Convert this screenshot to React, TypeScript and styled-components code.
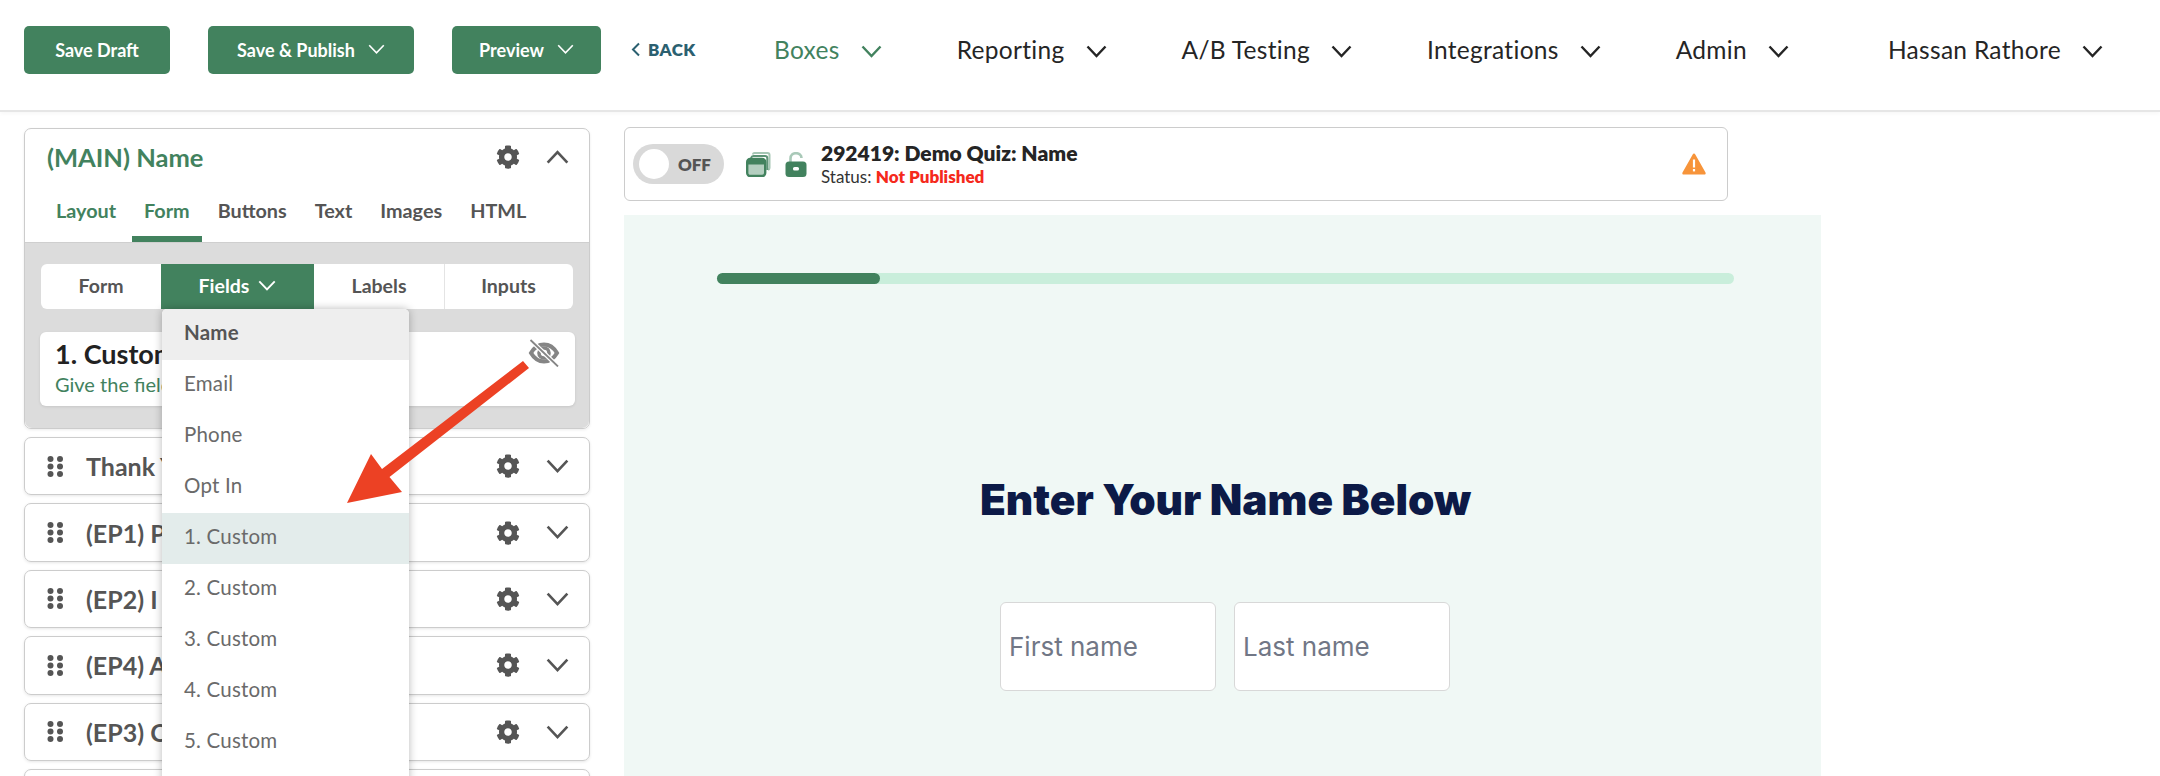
import styled, { createGlobalStyle } from "styled-components"
import { FaCog } from "react-icons/fa"

const green = "#42825e"
const grey = "#555555"

const GlobalStyle = createGlobalStyle`
  html, body {
    margin: 0;
    height: 776px;
    overflow: hidden;
    background: #fff;
    font-family: "Lato", "Open Sans", sans-serif;
  }
  * {
    box-sizing: border-box;
  }
`

const Page = styled.div`
  position: relative;
  width: 2160px;
  height: 776px;
  overflow: hidden;
`

const Header = styled.header`
  display: flex;
  align-items: center;
  height: 112px;
  padding: 0 0 11px 24px;
  border-bottom: 2px solid #e6e6e6;
  box-shadow: 0 2px 4px rgba(0, 0, 0, 0.03);
`

const ActionButton = styled.div<{ $width: number }>`
  display: flex;
  align-items: center;
  justify-content: center;
  gap: 13px;
  width: ${(p) => p.$width}px;
  height: 48px;
  margin-right: 38px;
  border-radius: 5px;
  background: ${green};
  color: #fff;
  font-size: 18px;
  font-weight: 700;
`

const BackLink = styled.div`
  display: flex;
  align-items: center;
  gap: 7px;
  margin-left: -8px;
  width: 143px;
  color: #2b6070;
  font-size: 17px;
  font-weight: 800;
  letter-spacing: 0.4px;
`

const NavList = styled.nav`
  display: flex;
  align-items: center;
  gap: 75px;
`

const NavItem = styled.div<{ $active?: boolean; $push?: number }>`
  display: flex;
  align-items: center;
  gap: 21px;
  margin-left: ${(p) => p.$push ?? 0}px;
  color: ${(p) => (p.$active ? green : "#252525")};
  font-size: 24.5px;
  letter-spacing: 0.3px;

  svg {
    margin-top: 5px;
  }
`

const Main = styled.main`
  display: flex;
  align-items: flex-start;
  gap: 34px;
  padding: 16px 0 0 24px;
`

const LeftColumn = styled.aside`
  display: flex;
  flex-direction: column;
  gap: 8px;
  flex: 0 0 566px;
`

const Panel = styled.section`
  border: 1px solid #cccccc;
  border-radius: 7px;
  box-shadow: 0 1px 3px rgba(0, 0, 0, 0.08);
`

const PanelTop = styled.div`
  display: flex;
  flex-direction: column;
  height: 114px;
  border-bottom: 1px solid #cfcfcf;
`

const PanelTitleRow = styled.div`
  display: flex;
  align-items: center;
  height: 58px;
  padding: 0 20px 2px 22px;
`

const PanelTitle = styled.h2`
  flex: 1;
  margin: 0;
  color: ${green};
  font-size: 25.5px;
  font-weight: 700;
`

const IconGroup = styled.div`
  display: flex;
  align-items: center;
  gap: 26px;
  color: ${grey};
`

const TabRow = styled.div`
  display: flex;
  gap: 4px;
  padding-left: 19px;
  flex: 1;
`

const Tab = styled.div<{ $active?: boolean; $green?: boolean }>`
  display: flex;
  align-items: center;
  height: 100%;
  padding: 0 12px 4px;
  border-bottom: ${(p) => (p.$active ? `6px solid ${green}` : "6px solid transparent")};
  color: ${(p) => (p.$green ? green : grey)};
  font-size: 19.8px;
  font-weight: 700;
`

const PanelBody = styled.div`
  height: 185px;
  padding: 21px 16px 0 16px;
  border-radius: 0 0 7px 7px;
  background: #dcdcdc;
`

const SubTabs = styled.div`
  display: grid;
  grid-template-columns: 120px 153px 130px 128px;
  height: 45px;
  border-radius: 6px;
  background: #fff;
`

const SubTab = styled.div<{ $active?: boolean; $divider?: boolean }>`
  position: relative;
  display: flex;
  align-items: center;
  justify-content: center;
  gap: 9px;
  padding-bottom: 2px;
  border-left: ${(p) => (p.$divider ? "1px solid #e4e4e4" : "none")};
  background: ${(p) => (p.$active ? green : "transparent")};
  color: ${(p) => (p.$active ? "#fff" : grey)};
  font-size: 19.5px;
  font-weight: 700;
`

const Dropdown = styled.div`
  position: absolute;
  top: 45px;
  left: 1px;
  z-index: 5;
  width: 247px;
  background: #fff;
  border-radius: 5px 5px 0 0;
  box-shadow: 0 0 8px rgba(0, 0, 0, 0.28);
  overflow: hidden;
`

const DropdownItem = styled.div<{ $selected?: boolean; $hover?: boolean }>`
  display: flex;
  align-items: center;
  height: 51px;
  padding: 0 0 5px 22px;
  background: ${(p) => (p.$selected ? "#eeeeee" : p.$hover ? "#e3eceb" : "#fff")};
  color: ${(p) => (p.$selected ? grey : "#6a6a6a")};
  font-size: 20.5px;
  font-weight: ${(p) => (p.$selected ? 700 : 400)};
  letter-spacing: 0.2px;
`

const FieldCard = styled.div`
  display: flex;
  justify-content: space-between;
  height: 74px;
  margin: 23px -2px 0 -1px;
  padding: 5px 15px 0 15px;
  border-radius: 6px;
  background: #fff;
  box-shadow: 0 1px 3px rgba(0, 0, 0, 0.1);

  > svg {
    margin-top: 2px;
  }
`

const FieldTitle = styled.div`
  color: #222;
  font-size: 27px;
  font-weight: 700;
  line-height: 34px;
`

const FieldHint = styled.div`
  color: ${green};
  font-size: 20px;
  line-height: 26px;
`

const SectionRow = styled.div`
  display: flex;
  align-items: center;
  height: 58.4px;
  padding: 0 20px 0 22px;
  border: 1px solid #cccccc;
  border-radius: 7px;
  box-shadow: 0 1px 3px rgba(0, 0, 0, 0.1);
`

const SectionName = styled.div`
  flex: 1;
  margin-left: 22px;
  color: ${grey};
  font-size: 25px;
  font-weight: 700;
`

const RightColumn = styled.div`
  display: flex;
  flex-direction: column;
  gap: 14px;
  margin-top: -1px;
  flex: 0 0 1197px;
`

const StatusBar = styled.div`
  display: flex;
  align-items: center;
  width: 1104px;
  height: 74px;
  padding: 0 21px 0 8px;
  border: 1px solid #cccccc;
  border-radius: 6px;
`

const ToggleTrack = styled.div`
  display: flex;
  align-items: center;
  justify-content: space-between;
  width: 91px;
  height: 40px;
  padding: 0 13px 0 6px;
  border-radius: 20px;
  background: #d9d9d9;
  color: ${grey};
  font-size: 17px;
  font-weight: 800;
`

const ToggleKnob = styled.div`
  width: 30px;
  height: 30px;
  border-radius: 50%;
  background: #fff;
`

const StatusIcons = styled.div`
  display: flex;
  align-items: center;
  gap: 14px;
  margin: 0 14px 0 22px;
`

const StatusText = styled.div`
  flex: 1;
`

const StatusTitle = styled.div`
  color: #252525;
  font-size: 21px;
  font-weight: 800;
  line-height: 26px;
`

const StatusLine = styled.div`
  color: #333;
  font-size: 17px;
  line-height: 22px;

  b {
    color: #f5291c;
    font-weight: 800;
  }
`

const Preview = styled.section`
  display: flex;
  flex-direction: column;
  align-items: center;
  height: 700px;
  padding: 58px 87px 0 93px;
  background: #f0f8f5;
`

const Progress = styled.div`
  width: 100%;
  height: 11px;
  border-radius: 6px;
  background: #c9eedb;
`

const ProgressFill = styled.div`
  height: 100%;
  border-radius: 6px;
  background: ${green};
`

const Heading = styled.h1`
  margin: 191px 0 0;
  color: #0c1a47;
  font-family: "Inter", sans-serif;
  font-size: 42.3px;
  font-weight: 900;
  line-height: 50px;
`

const NameRow = styled.div`
  display: flex;
  gap: 18px;
  margin: 77px 0 0 -1px;
`

const NameInput = styled.input`
  width: 216px;
  height: 89px;
  padding: 0 8px;
  border: 1px solid #d8d8d8;
  border-radius: 6px;
  background: #fff;
  outline: none;
  font-family: "Inter", sans-serif;
  font-size: 26px;

  &::placeholder {
    color: #717786;
    opacity: 1;
  }
`

const ArrowOverlay = styled.svg`
  position: absolute;
  top: 0;
  left: 0;
  z-index: 10;
  pointer-events: none;
`

const Chevron = ({ size = 21, up = false, weight = 2.4 }: { size?: number; up?: boolean; weight?: number }) => (
  <svg width={size} height={size * 0.62} viewBox="0 0 21 13" fill="none" stroke="currentColor" strokeWidth={weight}>
    <path d={up ? "M1.5 11.5 10.5 2l9 9.5" : "M1.5 1.5 10.5 11l9-9.5"} />
  </svg>
)

const BackChevron = () => (
  <svg width="10" height="15" viewBox="0 0 10 15" fill="none" stroke="currentColor" strokeWidth="2">
    <path d="M8 1.5 2 7.5l6 6" />
  </svg>
)

const DragDots = () => (
  <svg width="17" height="21" viewBox="0 0 17 21" fill="#555555">
    <circle cx="3.5" cy="3" r="3" />
    <circle cx="13" cy="3" r="3" />
    <circle cx="3.5" cy="10.5" r="3" />
    <circle cx="13" cy="10.5" r="3" />
    <circle cx="3.5" cy="18" r="3" />
    <circle cx="13" cy="18" r="3" />
  </svg>
)

const EyeOff = () => (
  <svg width="32" height="28" viewBox="0 0 32 28" fill="none">
    <path d="M3 14C6.5 8 11 5.5 16 5.5S25.5 8 29 14c-3.5 6-8 8.5-13 8.5S6.5 20 3 14Z" stroke="#858585" strokeWidth="4" />
    <circle cx="16" cy="14" r="5" stroke="#858585" strokeWidth="3.6" />
    <path d="M3 1.5 29.5 27" stroke="#fff" strokeWidth="4.5" />
    <path d="M2.5 1 30 27.5" stroke="#858585" strokeWidth="1.8" />
  </svg>
)

const CopyIcon = () => (
  <svg width="25" height="25" viewBox="0 0 25 25" fill="none">
    <path d="M7 2.5c0-1 .7-1.500 1.500-1.500h13c1.200 0 2 .8 2 2v13c0 1-.6 1.600-1.500 1.700" stroke="#a5c6b4" strokeWidth="2" />
    <path d="M5 6c.4-1.300 1.200-2 2.500-2h11.500c1.500 0 2.300.8 2.300 2.300V18" stroke="#5d9376" strokeWidth="2" />
    <rect x="1.200" y="7" width="18" height="17" rx="3" fill="#b4cfc0" stroke={green} strokeWidth="2.400" />
    <path d="M1.200 10c0-2 1-3 3-3h12c2 0 3 1 3 3v2.500h-18Z" fill={green} />
  </svg>
)

const LockIcon = () => (
  <svg width="22" height="25" viewBox="0 0 22 25" fill="none">
    <path d="M5.500 10V6.500C5.500 3 8 1.200 11 1.200s5.500 1.800 5.500 4.800" stroke="#a9c9b8" strokeWidth="2.600" />
    <rect x="0.500" y="9.500" width="21" height="15.500" rx="3.500" fill={green} />
    <rect x="8" y="15" width="6" height="3.600" rx="1.600" fill="#fff" />
  </svg>
)

const WarningIcon = () => (
  <svg width="24" height="22" viewBox="0 0 24 22">
    <path d="M12 .5c.6 0 1 .3 1.300.9l10.200 18c.5 1 0 2.100-1.200 2.100H1.700C.5 21.500 0 20.400.5 19.400l10.200-18c.3-.6.7-.9 1.300-.9Z" fill="#f7943a" />
    <rect x="10.900" y="6.500" width="2.200" height="8" fill="#fff" />
    <rect x="10.900" y="16" width="2.200" height="2.400" fill="#fff" />
  </svg>
)

const customFields = ["1. Custom", "2. Custom", "3. Custom", "4. Custom", "5. Custom"]
const sections = ["Thank Y", "(EP1) P", "(EP2) I", "(EP4) A", "(EP3) C", ""]
const navItems = ["Reporting", "A/B Testing", "Integrations", "Admin"]

export default function App() {
  return (
    <Page>
      <GlobalStyle />
      <Header>
        <ActionButton $width={146}>Save Draft</ActionButton>
        <ActionButton $width={206}>
          Save &amp; Publish <Chevron size={17} weight={2} />
        </ActionButton>
        <ActionButton $width={149}>
          Preview <Chevron size={17} weight={2} />
        </ActionButton>
        <BackLink>
          <BackChevron />
          BACK
        </BackLink>
        <NavList>
          <NavItem $active>
            Boxes <Chevron />
          </NavItem>
          {navItems.map((item) => (
            <NavItem key={item}>
              {item} <Chevron />
            </NavItem>
          ))}
          <NavItem $push={24}>
            Hassan Rathore <Chevron />
          </NavItem>
        </NavList>
      </Header>
      <Main>
        <LeftColumn>
          <Panel>
            <PanelTop>
              <PanelTitleRow>
                <PanelTitle>(MAIN) Name</PanelTitle>
                <IconGroup>
                  <FaCog size={24} />
                  <Chevron size={23} up />
                </IconGroup>
              </PanelTitleRow>
              <TabRow>
                <Tab $green>Layout</Tab>
                <Tab $green $active>
                  Form
                </Tab>
                <Tab>Buttons</Tab>
                <Tab>Text</Tab>
                <Tab>Images</Tab>
                <Tab>HTML</Tab>
              </TabRow>
            </PanelTop>
            <PanelBody>
              <SubTabs>
                <SubTab>Form</SubTab>
                <SubTab $active>
                  Fields <Chevron size={18} weight={2.2} />
                  <Dropdown>
                    <DropdownItem $selected>Name</DropdownItem>
                    <DropdownItem>Email</DropdownItem>
                    <DropdownItem>Phone</DropdownItem>
                    <DropdownItem>Opt In</DropdownItem>
                    {customFields.map((field, i) => (
                      <DropdownItem key={field} $hover={i === 0}>
                        {field}
                      </DropdownItem>
                    ))}
                    <DropdownItem />
                  </Dropdown>
                </SubTab>
                <SubTab>Labels</SubTab>
                <SubTab $divider>Inputs</SubTab>
              </SubTabs>
              <FieldCard>
                <div>
                  <FieldTitle>1. Custom</FieldTitle>
                  <FieldHint>Give the field</FieldHint>
                </div>
                <EyeOff />
              </FieldCard>
            </PanelBody>
          </Panel>
          {sections.map((name, i) => (
            <SectionRow key={i}>
              <DragDots />
              <SectionName>{name}</SectionName>
              <IconGroup>
                <FaCog size={24} />
                <Chevron size={23} />
              </IconGroup>
            </SectionRow>
          ))}
        </LeftColumn>
        <RightColumn>
          <StatusBar>
            <ToggleTrack>
              <ToggleKnob />
              OFF
            </ToggleTrack>
            <StatusIcons>
              <CopyIcon />
              <LockIcon />
            </StatusIcons>
            <StatusText>
              <StatusTitle>292419: Demo Quiz: Name</StatusTitle>
              <StatusLine>
                Status: <b>Not Published</b>
              </StatusLine>
            </StatusText>
            <WarningIcon />
          </StatusBar>
          <Preview>
            <Progress>
              <ProgressFill style={{ width: "16%" }} />
            </Progress>
            <Heading>Enter Your Name Below</Heading>
            <NameRow>
              <NameInput placeholder="First name" />
              <NameInput placeholder="Last name" />
            </NameRow>
          </Preview>
        </RightColumn>
      </Main>
      <ArrowOverlay width="2160" height="776" viewBox="0 0 2160 776">
        <polygon points="523,361 529,368 389.500,477 402,492 347,503 371,454 382,469" fill="#ec4124" />
      </ArrowOverlay>
    </Page>
  )
}
